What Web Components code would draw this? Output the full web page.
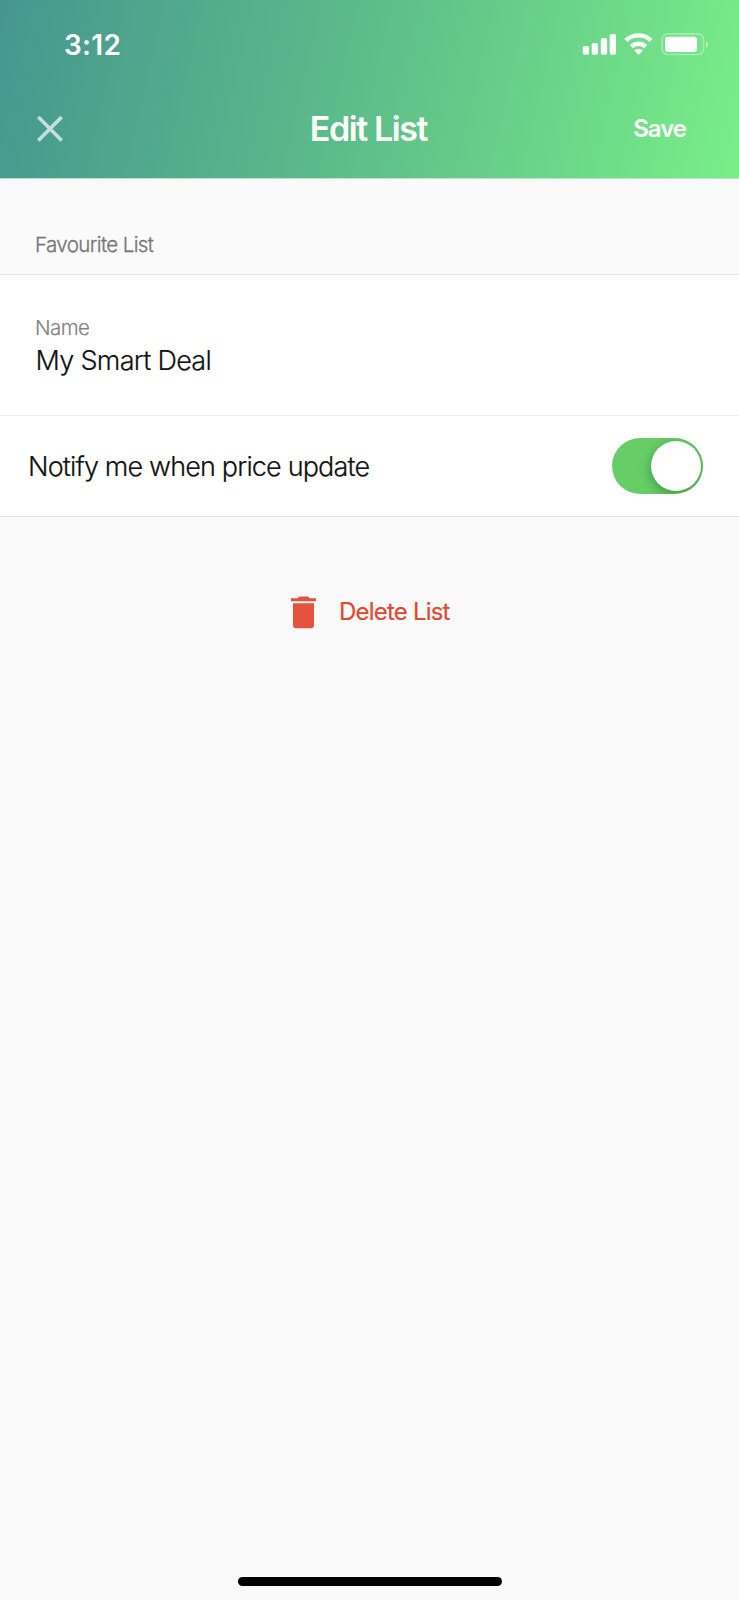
<!DOCTYPE html>
<html lang="en">
<head>
<meta charset="utf-8">
<title>Edit List</title>
<style>
html,body{margin:0;height:100%;background:#fafafa}
body{font-family:Inter,"Liberation Sans",sans-serif}
</style>
</head>
<body>
<edit-screen></edit-screen>
<script>
const define = (name, markup) => customElements.define(name, class extends HTMLElement {
  constructor() {
    super();
    const t = document.createElement('template');
    t.innerHTML = markup;
    this.attachShadow({ mode: 'open' }).appendChild(t.content.cloneNode(true));
  }
});

define('status-bar', `
<style>
:host{display:flex;align-items:center;justify-content:space-between;height:89px;padding:0 31px 0 64px;box-sizing:border-box;color:#fff}
.time{font-size:28px;line-height:34px;font-weight:600;letter-spacing:.3px}
svg{display:block;margin-top:-2px}
</style>
<span class="time">3:12</span>
<svg width="126" height="26" viewBox="582 31 126 26" fill="#fff">
<rect x="582.8" y="46" width="6.3" height="8.8" rx="1.7"/><rect x="591.7" y="43" width="6.3" height="11.8" rx="1.7"/><rect x="600.8" y="38" width="6.3" height="16.8" rx="1.7"/><rect x="609.7" y="34" width="6.3" height="20.8" rx="1.7"/>
<g fill="none" stroke="#fff" stroke-width="4.4"><path d="M625.9 40.400a18.3 18.3 0 0 1 25.2 0"/><path d="M631.4 46.6a10.3 10.3 0 0 1 14.2 0"/></g>
<path d="M638.5 54.9l-4.3-4.4a6.4 6.4 0 0 1 8.6 0z"/>
<rect x="662.2" y="33.9" width="41.4" height="20.6" rx="5.6" fill="none" stroke="#fff" stroke-opacity=".36" stroke-width="1.6"/>
<rect x="665" y="36.7" width="32" height="15.2" rx="2.4"/>
<path d="M706 41c3.6 1.3 3.6 5.600 0 7z" fill-opacity=".45"/>
</svg>`);

define('nav-bar', `
<style>
:host{display:grid;grid-template-columns:1fr auto 1fr;align-items:center;height:79px;padding:0 53px 0 37px;box-sizing:border-box;color:#fff}
svg{display:block}
.title{font-size:34px;line-height:44px;font-weight:600;letter-spacing:-1.4px;white-space:nowrap;margin-left:14px}
.action{justify-self:end;font-size:24px;line-height:30px;font-weight:600;letter-spacing:-1px}
</style>
<svg width="26" height="26" viewBox="0 0 26 26" fill="none" stroke="#fff" stroke-opacity=".68" stroke-width="3.6"><path d="M1.300 1l23.400 23.400M24.700 1l-23.400 23.400"/></svg>
<span class="title"><slot></slot></span>
<span class="action"><slot name="action"></slot></span>`);

define('app-header', `
<style>
:host{display:block;height:178px;background:linear-gradient(103deg,#46968f 0%,#5bba8a 45%,#68d189 70%,#79ee88 100%);border-bottom:1px solid #bfe5cf;box-sizing:content-box}
</style><slot></slot>`);

define('section-label', `
<style>
:host{display:flex;align-items:flex-end;height:96px;padding:0 35px 16px;box-sizing:border-box;border-bottom:1px solid #e6e6e6;color:#757575;font-size:20.5px;line-height:27px;font-weight:300;letter-spacing:-.6px;-webkit-text-stroke:.3px currentColor}
</style><span><slot></slot></span>`);

define('text-field', `
<style>
:host{display:flex;flex-direction:column;height:141px;padding:40px 35px 0;box-sizing:border-box;background:#fff;border-bottom:1px solid #ececec}
.label{font-size:20.5px;line-height:26px;color:#808080;font-weight:300;letter-spacing:-.6px;-webkit-text-stroke:.15px currentColor}
.value{font-size:27px;line-height:38px;padding:1px 0 0 .5px;color:#111;font-weight:300;letter-spacing:-.7px;-webkit-text-stroke:.2px currentColor}
</style>
<span class="label"><slot name="label"></slot></span><span class="value"><slot></slot></span>`);

define('toggle-switch', `
<style>
:host{display:flex;justify-content:flex-end;align-items:center;width:91px;height:56px;padding-right:2px;box-sizing:border-box;border-radius:28px;background:#67ce67;overflow:hidden}
i{display:block;width:50px;height:50px;border-radius:50%;background:#fff;box-shadow:0 3px 12px rgba(0,70,0,.42)}
</style><i></i>`);

define('setting-row', `
<style>
:host{display:flex;align-items:center;justify-content:space-between;height:101px;padding:0 36px 0 28px;box-sizing:border-box;background:#fff;border-bottom:1px solid #e2e2e2;color:#111;font-size:27px;line-height:38px;font-weight:300;letter-spacing:-.85px}
span{padding-top:1px;-webkit-text-stroke:.2px currentColor}
</style><span><slot></slot></span><slot name="control"></slot>`);

define('delete-button', `
<style>
:host{display:flex;align-items:center;height:34px;margin-top:78px;padding-left:291px;gap:22px;color:#df4a32;font-size:24px;line-height:34px;letter-spacing:-.8px}
svg{display:block}
span{-webkit-text-stroke:.2px currentColor}
</style>
<svg width="26" height="33" viewBox="0 0 26 33" fill="#e5533f"><path d="M0 2.300h6.800L8.300.4h9L18.600 2.300H25V5.200H0zM2 7.200H23V29.300a3 3 0 0 1-3 3H5a3 3 0 0 1-3-3z"/></svg>
<span><slot></slot></span>`);

define('home-indicator', `
<style>:host{display:block;width:264px;height:9px;margin:auto auto 14px 237.5px;border-radius:5px;background:#000}</style>`);

define('edit-screen', `
<style>:host{display:flex;flex-direction:column;width:739px;height:1600px;background:#fafafa;overflow:hidden}</style>
<app-header><status-bar></status-bar><nav-bar>Edit List<span slot="action">Save</span></nav-bar></app-header>
<section-label>Favourite List</section-label>
<text-field><span slot="label">Name</span>My Smart Deal</text-field>
<setting-row>Notify me when price update<toggle-switch slot="control"></toggle-switch></setting-row>
<delete-button>Delete List</delete-button>
<home-indicator></home-indicator>`);
</script>
</body>
</html>
